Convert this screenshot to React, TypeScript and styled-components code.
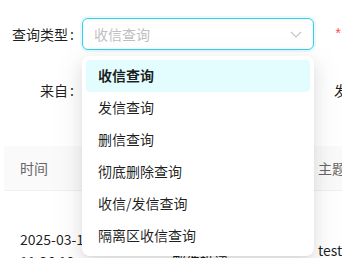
import React from 'react';
import styled, { createGlobalStyle, css } from 'styled-components';

const GlobalStyle = createGlobalStyle`
  html, body {
    margin: 0;
    padding: 0;
    background: #fff;
    overflow: hidden;
  }
  body {
    font-family: "Noto Sans CJK SC", "Noto Sans", sans-serif;
    font-size: 14px;
    color: rgba(0, 0, 0, 0.88);
  }
`;

const Page = styled.div`
  width: 342px;
  height: 258px;
  overflow: hidden;
  position: relative;
`;

const Form = styled.div`
  display: flex;
  flex-direction: column;
  gap: 24px;
  padding-top: 18px;
`;

const FormRow = styled.div`
  display: flex;
  gap: 20px;
  white-space: nowrap;
`;

const FormItem = styled.div`
  display: flex;
  align-items: center;
  height: 32px;
`;

const Label = styled.label<{ $required?: boolean; $wide?: boolean }>`
  display: block;
  width: ${(p) => (p.$wide ? 'auto' : '82px')};
  flex-shrink: 0;
  text-align: right;
  line-height: 32px;
  color: rgba(0, 0, 0, 0.88);

  &::before {
    ${(p) =>
      p.$required &&
      css`
        content: '*';
        color: #ff4d4f;
        margin-right: 4px;
        font-family: "Liberation Mono", monospace;
      `}
  }

  &::after {
    content: ':';
    margin: 0 8px 0 2px;
  }
`;

const SelectWrap = styled.div`
  position: relative;
  width: 232px;
`;

const SelectBox = styled.div<{ $focused?: boolean }>`
  box-sizing: border-box;
  height: 32px;
  display: flex;
  align-items: center;
  justify-content: space-between;
  padding: 0 11px;
  border: 1px solid ${(p) => (p.$focused ? '#2fd3e6' : '#d9d9d9')};
  border-radius: 6px;
  background: #fff;
  box-shadow: ${(p) => (p.$focused ? '0 0 0 2px rgba(5, 200, 230, 0.1)' : 'none')};
`;

const Placeholder = styled.span`
  color: #bfbfbf;
  line-height: 22px;
`;

const Dropdown = styled.div`
  position: absolute;
  top: 38px;
  left: 0;
  width: 232px;
  box-sizing: border-box;
  padding: 4px;
  background: #fff;
  border-radius: 8px;
  box-shadow: 0 6px 16px 0 rgba(0, 0, 0, 0.08),
    0 3px 6px -4px rgba(0, 0, 0, 0.12),
    0 9px 28px 8px rgba(0, 0, 0, 0.05);
  z-index: 10;
`;

const Option = styled.div<{ $active?: boolean }>`
  box-sizing: border-box;
  height: 32px;
  line-height: 30px;
  padding: 0 12px 2px;
  border-radius: 4px;
  color: rgba(0, 0, 0, 0.88);
  background: ${(p) => (p.$active ? '#e3fcfe' : 'transparent')};
  font-weight: ${(p) => (p.$active ? 600 : 400)};
`;

const Table = styled.div`
  margin: 40px 0 0 4px;
  width: 600px;
`;

const HeadRow = styled.div`
  display: grid;
  grid-template-columns: 152px 146px 1fr;
  background: #fafafa;
  border-bottom: 1px solid #f0f0f0;
`;

const HeadCell = styled.div`
  padding: 11px 16px;
  line-height: 22px;
  color: #666;
`;

const BodyRow = styled.div`
  display: grid;
  grid-template-columns: 152px 146px 1fr;
  align-items: center;
`;

const Cell = styled.div<{ $tall?: boolean }>`
  padding: ${(p) => (p.$tall ? '14px 16px 16px' : '16px')};
  line-height: 22px;
  color: rgba(0, 0, 0, 0.88);
`;

const options = ['收信查询', '发信查询', '删信查询', '彻底删除查询', '收信/发信查询', '隔离区收信查询'];

function Chevron() {
  return (
    <svg width="12" height="7" viewBox="0 0 12 7" fill="none">
      <path d="M1 1l5 5 5-5" stroke="#c4c4c4" strokeWidth="1.1" />
    </svg>
  );
}

export default function App() {
  return (
    <Page>
      <GlobalStyle />
      <Form>
        <FormRow>
          <FormItem>
            <Label>查询类型</Label>
            <SelectWrap>
              <SelectBox $focused>
                <Placeholder>收信查询</Placeholder>
                <Chevron />
              </SelectBox>
              <Dropdown>
                {options.map((o, i) => (
                  <Option key={o} $active={i === 0}>
                    {o}
                  </Option>
                ))}
              </Dropdown>
            </SelectWrap>
          </FormItem>
          <FormItem>
            <Label $required $wide>
              时间范围
            </Label>
          </FormItem>
        </FormRow>
        <FormRow>
          <FormItem>
            <Label>来自</Label>
            <SelectWrap>
              <SelectBox />
            </SelectWrap>
          </FormItem>
          <FormItem>
            <Label $wide>发件人</Label>
          </FormItem>
        </FormRow>
      </Form>

      {/* Result table */}
      <Table>
        <HeadRow>
          <HeadCell>时间</HeadCell>
          <HeadCell>类型</HeadCell>
          <HeadCell>主题</HeadCell>
        </HeadRow>
        <BodyRow>
          <Cell>2025-03-11 11:36:12</Cell>
          <Cell $tall>
            收件人
            <br />
            admin@test.com
            <br />
            邮件投递
            <br />
            成功
          </Cell>
          <Cell>test</Cell>
        </BodyRow>
      </Table>
    </Page>
  );
}
